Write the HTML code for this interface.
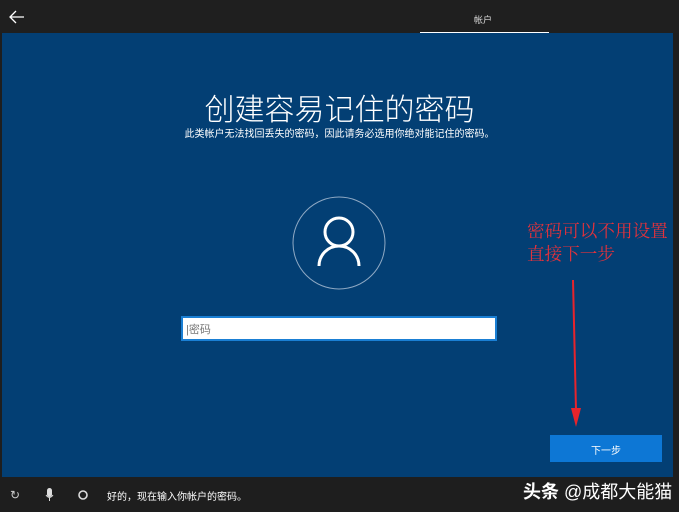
<!DOCTYPE html>
<html><head><meta charset="utf-8"><style>
body{margin:0;width:679px;height:512px;overflow:hidden;background:#1e1e1e;font-family:"Liberation Sans","Noto Sans CJK SC",sans-serif;position:relative}
.top{position:absolute;left:0;top:0;width:679px;height:33px;background:#1f1f1f}
.main{position:absolute;left:2px;top:33px;width:671px;height:444px;background:#033f74}
.bot{position:absolute;left:0;top:477px;width:679px;height:35px;background:#1e1e1e}
.t{position:absolute;color:#fff;white-space:nowrap}
</style></head><body>
<div class="top"></div>
<svg style="position:absolute;left:9px;top:10px" width="16" height="14"><path d="M1 7H15M7 1L1 7L7 13" stroke="#fff" stroke-width="1.3" fill="none"/></svg>
<div class="t" style="left:474px;top:13px;font-size:9px;color:#ddd">帐户</div>
<div style="position:absolute;left:420px;top:32px;width:129px;height:2px;background:#fff"></div>
<div class="main"></div>
<div class="t" style="left:0;width:679px;text-align:center;top:85px;font-size:30px;font-weight:300">创建容易记住的密码</div>
<div class="t" style="left:0;width:679px;text-align:center;top:125px;font-size:10px">此类帐户无法找回丢失的密码，因此请务必选用你绝对能记住的密码。</div>
<svg style="position:absolute;left:290px;top:194px" width="100" height="100"><circle cx="49" cy="49" r="46" stroke="#8fa9c4" stroke-width="1" fill="none"/><circle cx="49" cy="38" r="14" stroke="#fff" stroke-width="3" fill="none"/><path d="M29 72A20 20 0 0 1 69 72" stroke="#fff" stroke-width="3" fill="none"/></svg>
<div style="position:absolute;left:181px;top:316px;width:312px;height:21px;background:#fff;border:2px solid #1a7fd4"></div>
<div class="t" style="left:186px;top:321px;font-size:11px;color:#777">|密码</div>
<div class="t" style="left:527px;top:219px;font-size:17.6px;line-height:23px;color:#e0323c;font-family:'Noto Serif CJK SC',serif">密码可以不用设置<br>直接下一步</div>
<svg style="position:absolute;left:565px;top:278px" width="20" height="152"><path d="M8 2L11 132" stroke="#e8242c" stroke-width="2"/><path d="M6 130L16 130L11 149Z" fill="#e8242c"/></svg>
<div style="position:absolute;left:550px;top:435px;width:112px;height:27px;background:#0d77d5"></div>
<div class="t" style="left:550px;width:112px;text-align:center;top:442px;font-size:10px">下一步</div>
<div class="bot"></div>
<div class="t" style="left:10px;top:488px;font-size:12px;color:#ccc">↻</div>
<svg style="position:absolute;left:45px;top:488px" width="10" height="14"><rect x="2" y="0" width="5" height="9" rx="2.5" fill="#ddd"/><path d="M1 7Q4.5 12 8 7M4.5 10V13" stroke="#ddd" fill="none"/></svg>
<svg style="position:absolute;left:77px;top:489px" width="12" height="12"><circle cx="6" cy="6" r="4" stroke="#ddd" stroke-width="1.6" fill="none"/></svg>
<div class="t" style="left:107px;top:488px;font-size:10px">好的，现在输入你帐户的密码。</div>
<div class="t" style="left:523px;top:478px;font-size:18px"><b>头条</b> @成都大能猫</div>
</body></html>
